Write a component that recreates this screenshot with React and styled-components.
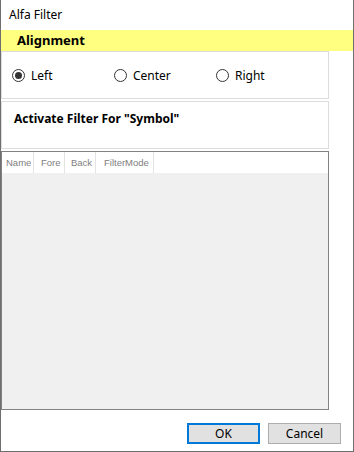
import React from "react";
import styled, { createGlobalStyle } from "styled-components";

const GlobalStyle = createGlobalStyle`
  html, body {
    margin: 0;
    padding: 0;
    background: #ffffff;
  }
  * {
    box-sizing: border-box;
  }
`;

const Window = styled.div`
  width: 354px;
  height: 452px;
  display: flex;
  flex-direction: column;
  background: #ffffff;
  border: 1px solid #6f6f6f;
  border-top: none;
  font-family: "Noto Sans", "Liberation Sans", sans-serif;
  color: #000;
`;

const TitleBar = styled.div`
  height: 31px;
  display: flex;
  align-items: center;
  padding-left: 8px;
  font-size: 12px;
`;

const SectionHeader = styled.div`
  height: 22px;
  display: flex;
  align-items: center;
  padding-left: 16px;
  background: #ffff80;
  font-size: 13px;
  font-weight: 700;
`;

const Body = styled.div`
  flex: 1;
  display: flex;
  flex-direction: column;
  gap: 2px;
  width: 328px;
`;

const Panel = styled.div`
  height: 48px;
  border: 1px solid #dcdcdc;
  display: flex;
  align-items: ${(p) => (p.$top ? "flex-start" : "center")};
  padding: ${(p) => (p.$top ? "9px 0 0 12px" : "0 0 0 10px")};
`;

const PanelTitle = styled.div`
  font-size: 12px;
  font-weight: 700;
  line-height: 16px;
`;

const RadioItem = styled.label`
  width: 102px;
  display: flex;
  align-items: center;
  gap: 6px;
  font-size: 12px;
`;

const RadioCircle = styled.span`
  width: 13px;
  height: 13px;
  border-radius: 50%;
  border: 1px solid #333;
  display: flex;
  align-items: center;
  justify-content: center;
  &::after {
    content: "";
    width: 7px;
    height: 7px;
    border-radius: 50%;
    background: ${(p) => (p.$checked ? "#333" : "transparent")};
  }
`;

const Grid = styled.div`
  height: 259px;
  border: 1px solid #828282;
  display: flex;
  flex-direction: column;
  background: #f0f0f0;
`;

const HeaderRow = styled.div`
  height: 21px;
  display: flex;
  background: #ffffff;
`;

const HeaderCell = styled.div`
  width: ${(p) => p.$w}px;
  display: flex;
  align-items: center;
  padding-left: ${(p) => p.$pad || 3}px;
  border-right: 1px solid #e3e3e3;
  font-family: "Liberation Sans", sans-serif;
  font-size: 9.5px;
  color: #808080;
`;

const Footer = styled.div`
  height: 42px;
  display: flex;
  justify-content: flex-end;
  gap: 8px;
  padding: 13px 12px 0 0;
`;

const Button = styled.button`
  width: ${(p) => p.$w}px;
  height: 21px;
  padding: 0;
  background: #e1e1e1;
  border: ${(p) => (p.$default ? "2px solid #0078d7" : "1px solid #adadad")};
  font-family: "Noto Sans", "Liberation Sans", sans-serif;
  font-size: 12px;
  color: #000;
`;

const columns = [
  { name: "Name", w: 32, pad: 4 },
  { name: "Fore", w: 31, pad: 7 },
  { name: "Back", w: 31, pad: 6 },
  { name: "FilterMode", w: 58, pad: 8 },
];

export default function App() {
  return (
    <>
      <GlobalStyle />
      <Window>
        <TitleBar>Alfa Filter</TitleBar>
        <SectionHeader>Alignment</SectionHeader>
        <Body>
          <Panel>
            <RadioItem>
              <RadioCircle $checked />
              Left
            </RadioItem>
            <RadioItem>
              <RadioCircle />
              Center
            </RadioItem>
            <RadioItem>
              <RadioCircle />
              Right
            </RadioItem>
          </Panel>
          <Panel $top>
            <PanelTitle>Activate Filter For "Symbol"</PanelTitle>
          </Panel>
          <Grid>
            <HeaderRow>
              {columns.map((c) => (
                <HeaderCell key={c.name} $w={c.w} $pad={c.pad}>
                  {c.name}
                </HeaderCell>
              ))}
            </HeaderRow>
          </Grid>
        </Body>
        <Footer>
          <Button $w={73} $default>
            OK
          </Button>
          <Button $w={73}>Cancel</Button>
        </Footer>
      </Window>
    </>
  );
}
